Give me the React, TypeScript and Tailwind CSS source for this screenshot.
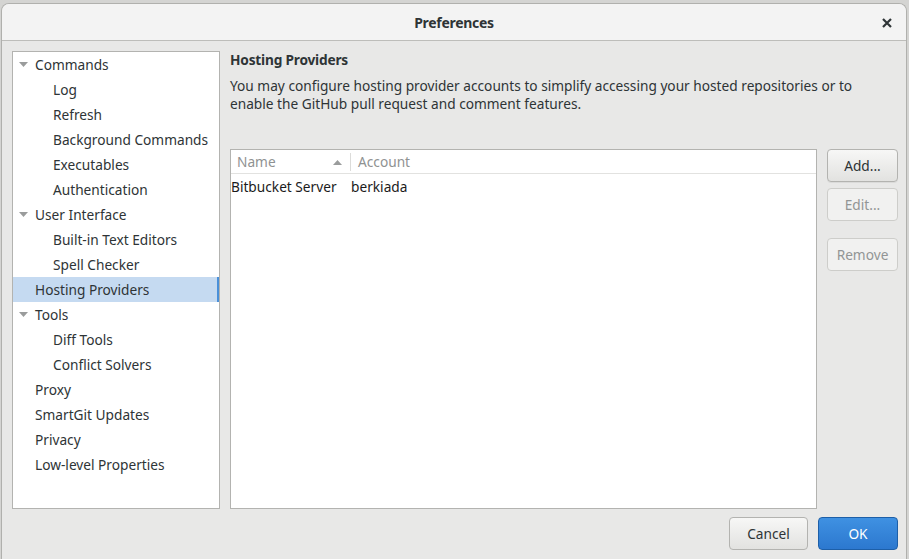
import React from 'react';

type Node = { label: string; level: 0 | 1; expandable?: boolean; selected?: boolean };

const tree: Node[] = [
  { label: 'Commands', level: 0, expandable: true },
  { label: 'Log', level: 1 },
  { label: 'Refresh', level: 1 },
  { label: 'Background Commands', level: 1 },
  { label: 'Executables', level: 1 },
  { label: 'Authentication', level: 1 },
  { label: 'User Interface', level: 0, expandable: true },
  { label: 'Built-in Text Editors', level: 1 },
  { label: 'Spell Checker', level: 1 },
  { label: 'Hosting Providers', level: 0, selected: true },
  { label: 'Tools', level: 0, expandable: true },
  { label: 'Diff Tools', level: 1 },
  { label: 'Conflict Solvers', level: 1 },
  { label: 'Proxy', level: 0 },
  { label: 'SmartGit Updates', level: 0 },
  { label: 'Privacy', level: 0 },
  { label: 'Low-level Properties', level: 0 },
];

// small grey expander triangle
const Expander = () => (
  <svg width="9" height="5" viewBox="0 0 9 5" className="absolute left-[6px] top-[10px]">
    <path d="M0 0 L9 0 L4.5 5 Z" fill="#9a9c9c" />
  </svg>
);

const TreeRow = ({ node }: { node: Node }) => (
  <div
    className={
      'relative h-[25px] flex items-center pt-[2px] whitespace-nowrap ' +
      (node.level === 0 ? 'pl-[22px] ' : 'pl-[40px] ') +
      (node.selected ? 'bg-[#c5daf1] border-r-2 border-[#4a90d9]' : '')
    }
  >
    {node.expandable && <Expander />}
    <span>{node.label}</span>
  </div>
);

const SideButton = ({ label, disabled, className = '' }: { label: string; disabled?: boolean; className?: string }) => (
  <button
    className={
      'w-[71px] h-[33px] pt-[2px] rounded-[4px] border text-[13.7px] ' +
      (disabled
        ? 'bg-[#f1f1f0] border-[#cdcdca] text-[#929595] '
        : 'bg-gradient-to-b from-[#f7f7f6] to-[#e2e2e0] border-[#b3b3b0] text-[#2e3436] shadow-[0_1px_0_rgba(0,0,0,0.06)] ') +
      className
    }
  >
    {label}
  </button>
);

export default function App() {
  return (
    <div
      className="w-[909px] h-[559px] bg-[#d4d4d2] pt-[3px] pl-[1px] pr-[2px] overflow-hidden text-[#2e3436]"
      style={{ fontFamily: '"Noto Sans", "Open Sans", sans-serif' }}
    >
      <div className="h-full flex flex-col rounded-t-[8px] border border-[#b0b0ad] border-b-0 bg-[#e8e8e7] overflow-hidden">
        {/* Title bar */}
        <div className="relative h-[37px] shrink-0 flex items-center justify-center bg-[#f3f3f3] border-b border-[#bdbdba]">
          <span className="text-[14px] font-bold tracking-[-0.3px] text-[#2e3436]">Preferences</span>
          <svg width="10" height="10" viewBox="0 0 10 10" className="absolute right-[14px] top-[14px]">
            <path d="M1 1 L9 9 M9 1 L1 9" stroke="#2e3436" strokeWidth="2.2" />
          </svg>
        </div>

        {/* Body */}
        <div className="flex-1 flex flex-col pl-[10px] pr-[8px] pt-[10px] pb-[9px]">
          <div className="flex h-[458px] gap-[10px] text-[13.7px]">
            {/* Tree */}
            <div className="w-[208px] shrink-0 bg-white border border-[#b3b3b0] overflow-hidden">
              {tree.map((n) => (
                <TreeRow key={n.label} node={n} />
              ))}
            </div>

            {/* Page */}
            <div className="flex-1 flex flex-col">
              <div className="font-bold leading-[18px] tracking-[-0.2px]">Hosting Providers</div>
              <p className="mt-[8px] leading-[18px] text-[#2e3436]">
                You may configure hosting provider accounts to simplify accessing your hosted repositories or to
                <br />
                enable the GitHub pull request and comment features.
              </p>

              <div className="flex gap-[10px] mt-[36px] flex-1">
                {/* Table */}
                <div className="w-[587px] bg-white border border-[#b3b3b0] flex flex-col">
                  <div className="h-[24px] pt-[2px] flex items-center border-b border-[#e2e2e0] text-[#8f9292]">
                    <div className="relative w-[120px] h-full flex items-center pl-[6px]">
                      <span>Name</span>
                      <svg width="9" height="5" viewBox="0 0 9 5" className="absolute left-[102px] top-[8px]">
                        <path d="M0 5 L9 5 L4.5 0 Z" fill="#9a9c9c" />
                      </svg>
                      <span className="absolute right-0 top-[1px] h-[18px] w-px bg-[#dcdcda]" />
                    </div>
                    <div className="pl-[7px]">Account</div>
                  </div>
                  <div className="h-[25px] pt-[2px] flex items-center text-[#1b1b1b]">
                    <div className="w-[120px] whitespace-nowrap">Bitbucket Server</div>
                    <div>berkiada</div>
                  </div>
                </div>

                {/* Side buttons */}
                <div className="flex flex-col">
                  <SideButton label="Add..." />
                  <SideButton label="Edit..." disabled className="mt-[6px]" />
                  <SideButton label="Remove" disabled className="mt-[17px]" />
                </div>
              </div>
            </div>
          </div>

          {/* Bottom buttons */}
          <div className="mt-auto flex justify-end gap-[10px] text-[13.7px]">
            <button className="w-[79px] h-[33px] pt-[2px] rounded-[4px] border border-[#b3b3b0] bg-gradient-to-b from-[#f7f7f6] to-[#e2e2e0] text-[#2e3436]">
              Cancel
            </button>
            <button className="w-[80px] h-[33px] pt-[2px] rounded-[4px] border border-[#1d5fa8] bg-gradient-to-b from-[#3f91e2] to-[#2c78cf] text-white">
              OK
            </button>
          </div>
        </div>
      </div>
    </div>
  );
}
